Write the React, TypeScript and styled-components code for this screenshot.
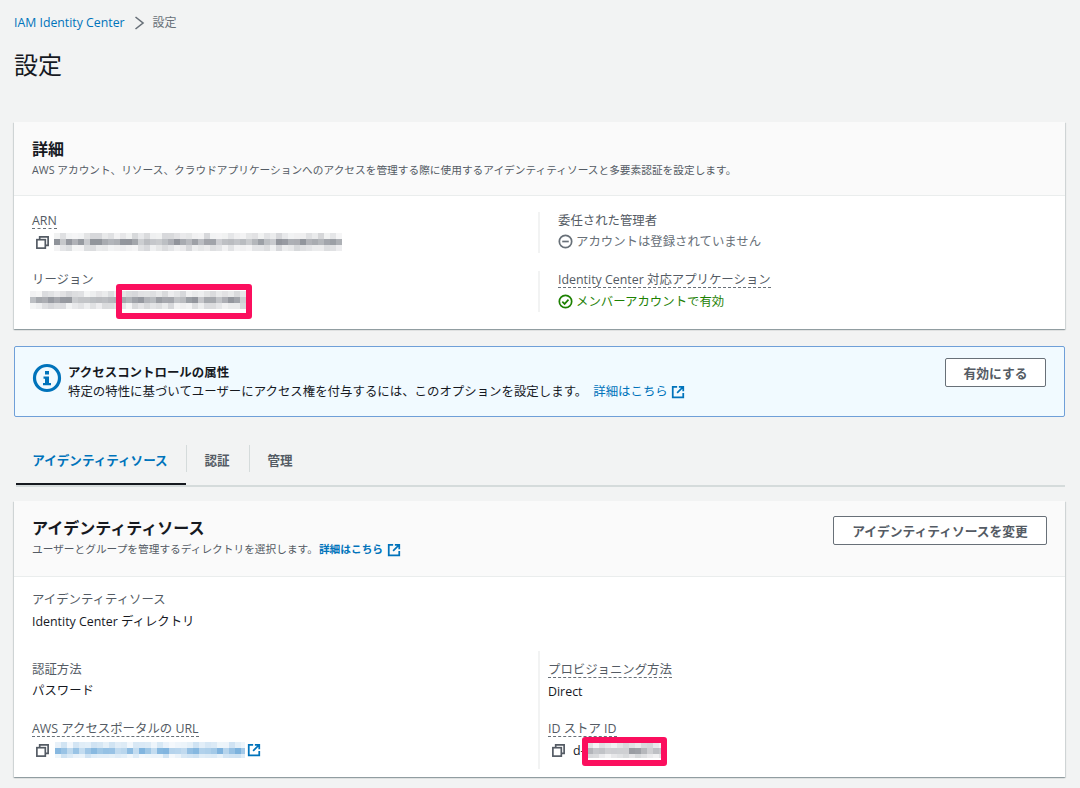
import React from "react";
import styled, { createGlobalStyle } from "styled-components";

const Global = createGlobalStyle`
  html, body { margin: 0; padding: 0; background: #f2f3f3; }
  body { font-family: "Open Sans", "Noto Sans CJK JP", sans-serif; color: #16191f; font-size: 12px; }
`;

const Page = styled.div`
  width: 1080px;
  height: 788px;
  overflow: hidden;
  box-sizing: border-box;
  padding: 14px 15px 0 14px;
`;
const Crumbs = styled.nav`
  display: flex;
  align-items: center;
  height: 17px;
  font-size: 12.3px;
  line-height: 17px;
`;
const CrumbLink = styled.a`
  color: #0073bb;
`;
const CrumbCurrent = styled.span`
  color: #687078;
  margin-left: 7px;
  font-size: 12px;
`;
const CrumbSep = styled.svg`
  margin-left: 9px;
  width: 12px;
  height: 14px;
`;
const Title = styled.h1`
  margin: 16px 0 0 0;
  font-size: 24px;
  line-height: 36px;
  font-weight: 400;
  color: #16191f;
`;
const Card = styled.section`
  background: #fff;
  box-shadow: 0 1px 1px 0 rgba(0, 28, 36, 0.25), 1px 1px 1px 0 rgba(0, 28, 36, 0.1), -1px 1px 1px 0 rgba(0, 28, 36, 0.1);
`;
const FirstCard = styled(Card)`
  margin-top: 39px;
  height: 207px;
`;
const SecondCard = styled(Card)`
  margin-top: 14px;
  height: 276px;
`;
const CardHead = styled.header<{ $h: number }>`
  box-sizing: border-box;
  height: ${(p) => p.$h}px;
  background: #fafafa;
  border-bottom: 1px solid #eaeded;
  padding: 0 18px;
  display: flex;
  justify-content: space-between;
  align-items: flex-start;
`;
const HeadText = styled.div<{ $top: number }>`
  padding-top: ${(p) => p.$top}px;
`;
const CardTitle = styled.h2<{ $size: number }>`
  margin: 0;
  font-size: ${(p) => p.$size}px;
  line-height: 20px;
  font-weight: 700;
  color: #16191f;
`;
const CardDesc = styled.p`
  margin: 4px 0 0;
  font-size: 10.7px;
  line-height: 15px;
  color: #545b64;
  display: flex;
  align-items: center;
`;
const Columns = styled.div<{ $top: number; $gap: number }>`
  display: grid;
  grid-template-columns: 506px 1fr;
  padding: ${(p) => p.$top}px 0 0 18px;
  row-gap: ${(p) => p.$gap}px;
`;
const Field = styled.div<{ $divider?: boolean; $inset?: number; $tall?: boolean }>`
  position: relative;
  box-sizing: border-box;
  height: ${(p) => (p.$tall ? 59 : 41)}px;
  ${(p) => (p.$tall ? "padding-top: 10px;" : "")}
  ${(p) => (p.$divider ? `border-left: 2px solid #f2f3f3; padding-left: ${p.$inset}px;` : "")}
`;
const Label = styled.div<{ $hint?: boolean }>`
  width: fit-content;
  font-size: 12.4px;
  line-height: 17px;
  height: 16px;
  color: #545b64;
  ${(p) => (p.$hint ? "border-bottom: 1px dashed #687078;" : "")}
`;
const Value = styled.div<{ $tone?: string }>`
  display: flex;
  align-items: center;
  height: 20px;
  margin-top: 3px;
  font-size: 12.4px;
  color: ${(p) => p.$tone || "#16191f"};
`;
const SingleField = styled.div`
  height: 41px;
  padding: 14px 0 0 18px;
  margin-bottom: 19px;
  ${Value} {
    margin-top: 4px;
  }
`;
const CopyIcon = styled.svg`
  width: 15px;
  height: 15px;
  margin: 0 5px 0 3px;
  flex: none;
`;
const StatusIcon = styled.svg`
  width: 15px;
  height: 15px;
  margin-right: 3px;
  flex: none;
`;
const Mosaic = styled.svg<{ $left?: number }>`
  flex: none;
  margin-left: ${(p) => p.$left || 0}px;
`;
const IdPrefix = styled.span`
  margin-left: 2px;
`;
const Highlight = styled.div<{ $l: number; $t: number; $w: number; $h: number }>`
  position: absolute;
  left: ${(p) => p.$l}px;
  top: ${(p) => p.$t}px;
  width: ${(p) => p.$w}px;
  height: ${(p) => p.$h}px;
  box-sizing: border-box;
  border: 6px solid #fb0f5e;
  border-radius: 3px;
`;
const Alert = styled.aside`
  box-sizing: border-box;
  height: 71px;
  margin-top: 17px;
  background: #f1faff;
  border: 1px solid #6f9fd8;
  border-radius: 2px;
  display: flex;
  padding: 10px 18px 0 17px;
`;
const AlertIcon = styled.svg`
  width: 30px;
  height: 30px;
  margin-top: 6px;
  flex: none;
`;
const AlertBody = styled.div`
  flex: 1;
  margin-left: 6px;
  padding-top: 7px;
`;
const AlertTitle = styled.div`
  font-weight: 700;
  font-size: 12.45px;
  line-height: 18px;
  color: #16191f;
`;
const AlertText = styled.div`
  display: flex;
  align-items: center;
  margin-top: 0;
  font-size: 12.43px;
  line-height: 19px;
  color: #16191f;
`;
const ExtLink = styled.a<{ $bold?: boolean; $left: number }>`
  display: inline-flex;
  align-items: center;
  margin-left: ${(p) => p.$left}px;
  color: #0073bb;
  font-weight: ${(p) => (p.$bold ? 700 : 400)};
`;
const ExtIcon = styled.svg<{ $left?: number }>`
  width: 14px;
  height: 14px;
  margin-left: ${(p) => p.$left ?? 4}px;
  flex: none;
`;
const Button = styled.button<{ $w: number; $top?: number }>`
  box-sizing: border-box;
  width: ${(p) => p.$w}px;
  height: 29px;
  margin-top: ${(p) => p.$top || 0}px;
  background: #fff;
  border: 1px solid #687078;
  border-radius: 2px;
  font-family: inherit;
  font-size: 12.75px;
  font-weight: 700;
  color: #545b64;
  padding: 0;
  flex: none;
`;
const TabBar = styled.div`
  display: flex;
  height: 40px;
  margin-top: 28px;
  margin-left: 2px;
  border-bottom: 2px solid #d5dbdb;
`;
const Tab = styled.div<{ $active?: boolean; $w: number }>`
  position: relative;
  box-sizing: border-box;
  width: ${(p) => p.$w}px;
  height: 40px;
  text-align: center;
  padding: 6px 2px 0 0;
  line-height: 20px;
  font-size: 12.55px;
  font-weight: 700;
  color: ${(p) => (p.$active ? "#0073bb" : "#545b64")};
  ${(p) => (p.$active ? "border-bottom: 2px solid #16191f;" : "")}
`;
const TabSep = styled.div`
  width: 1px;
  height: 27px;
  background: #d5dbdb;
  flex: none;
`;

function Pixels({ w, h, seed, tint, left }: { w: number; h: number; seed: number; tint: "grey" | "blue"; left?: number }) {
  const cell = 6;
  const cols = Math.ceil(w / cell);
  const rows = Math.ceil(h / cell);
  const cells: React.ReactNode[] = [];
  let s = seed;
  for (let y = 0; y < rows; y++) {
    for (let x = 0; x < cols; x++) {
      s = (s * 16807) % 2147483647;
      const r = (s % 1000) / 1000;
      const mid = y === Math.floor(rows / 2);
      const a = mid ? 0.3 + r * 0.4 : 0.06 + r * 0.2;
      const fill = tint === "grey" ? `rgba(95,100,110,${a})` : `rgba(60,140,205,${a})`;
      cells.push(<rect key={`${x}-${y}`} x={x * cell} y={y * cell} width={cell} height={cell} fill={fill} />);
    }
  }
  return (
    <Mosaic $left={left} width={w} height={h} viewBox={`0 0 ${w} ${h}`}>
      {cells}
    </Mosaic>
  );
}

const Copy = () => (
  <CopyIcon viewBox="0 0 16 16" fill="none" stroke="#545b64" strokeWidth="1.8">
    <rect x="2" y="5" width="9" height="9" />
    <path d="M5 5V2h9v9h-3" />
  </CopyIcon>
);

const External = ({ left }: { left?: number }) => (
  <ExtIcon $left={left} viewBox="0 0 16 16" fill="none" stroke="#0073bb" strokeWidth="2">
    <path d="M7 2H2v12h12V9" />
    <path d="M9 2h5v5M14 2L7 9" />
  </ExtIcon>
);

export default function App() {
  return (
    <>
      <Global />
      <Page>
        <Crumbs>
          <CrumbLink>IAM Identity Center</CrumbLink>
          <CrumbSep viewBox="0 0 12 14" fill="none" stroke="#687078" strokeWidth="1.6">
            <path d="M1.5 1L9 7l-7.5 6" />
          </CrumbSep>
          <CrumbCurrent>設定</CrumbCurrent>
        </Crumbs>
        <Title>設定</Title>

        <FirstCard>
          <CardHead $h={74}>
            <HeadText $top={17}>
              <CardTitle $size={16}>詳細</CardTitle>
              <CardDesc>AWS アカウント、リソース、クラウドアプリケーションへのアクセスを管理する際に使用するアイデンティティソースと多要素認証を設定します。</CardDesc>
            </HeadText>
          </CardHead>
          <Columns $top={16} $gap={18}>
            <Field>
              <Label $hint>ARN</Label>
              <Value>
                <Copy />
                <Pixels w={288} h={18} seed={77} tint="grey" left={-1} />
              </Value>
            </Field>
            <Field $divider $inset={18}>
              <Label>委任された管理者</Label>
              <Value $tone="#687078">
                <StatusIcon viewBox="0 0 16 16" fill="none" stroke="#687078" strokeWidth="1.8">
                  <circle cx="8" cy="8" r="6.6" />
                  <path d="M4.5 8h7" />
                </StatusIcon>
                アカウントは登録されていません
              </Value>
            </Field>
            <Field>
              <Label>リージョン</Label>
              <Value>
                <Pixels w={216} h={18} seed={901} tint="grey" left={-2} />
              </Value>
              <Highlight $l={84} $t={13} $w={136} $h={35} />
            </Field>
            <Field $divider $inset={18}>
              <Label $hint>Identity Center 対応アプリケーション</Label>
              <Value $tone="#1d8102">
                <StatusIcon viewBox="0 0 16 16" fill="none" stroke="#1d8102" strokeWidth="1.8">
                  <circle cx="8" cy="8" r="6.6" />
                  <path d="M4.6 8.2l2.4 2.4 4.2-4.6" />
                </StatusIcon>
                メンバーアカウントで有効
              </Value>
            </Field>
          </Columns>
        </FirstCard>

        <Alert>
          <AlertIcon viewBox="0 0 30 30">
            <circle cx="15" cy="15" r="12.5" fill="none" stroke="#0073bb" strokeWidth="3.2" />
            <rect x="13" y="8" width="4" height="3.5" fill="#0073bb" />
            <path d="M11.5 13.5H17V20h2v2.2h-8V20h2v-4.3h-1.5z" fill="#0073bb" />
          </AlertIcon>
          <AlertBody>
            <AlertTitle>アクセスコントロールの属性</AlertTitle>
            <AlertText>
              特定の特性に基づいてユーザーにアクセス権を付与するには、このオプションを設定します。
              <ExtLink $left={6}>
                詳細はこちら
                <External left={3} />
              </ExtLink>
            </AlertText>
          </AlertBody>
          <Button $w={101} $top={1}>有効にする</Button>
        </Alert>

        <TabBar>
          <Tab $active $w={170}>アイデンティティソース</Tab>
          <TabSep />
          <Tab $w={62}>認証</Tab>
          <TabSep />
          <Tab $w={62}>管理</Tab>
        </TabBar>

        <SecondCard>
          <CardHead $h={76}>
            <HeadText $top={17}>
              <CardTitle $size={16}>アイデンティティソース</CardTitle>
              <CardDesc>
                ユーザーとグループを管理するディレクトリを選択します。
                <ExtLink $bold $left={1}>
                  詳細はこちら
                  <External />
                </ExtLink>
              </CardDesc>
            </HeadText>
            <Button $w={214} $top={15}>アイデンティティソースを変更</Button>
          </CardHead>
          <SingleField>
            <Label>アイデンティティソース</Label>
            <Value>Identity Center ディレクトリ</Value>
          </SingleField>
          <Columns $top={0} $gap={0}>
            <Field $tall>
              <Label>認証方法</Label>
              <Value>パスワード</Value>
            </Field>
            <Field $tall $divider $inset={8}>
              <Label $hint>プロビジョニング方法</Label>
              <Value>Direct</Value>
            </Field>
            <Field $tall>
              <Label $hint>AWS アクセスポータルの URL</Label>
              <Value>
                <Copy />
                <Pixels w={190} h={16} seed={4242} tint="blue" />
                <External left={2} />
              </Value>
            </Field>
            <Field $tall $divider $inset={8}>
              <Label $hint>ID ストア ID</Label>
              <Value>
                <Copy />
                <IdPrefix>d-</IdPrefix>
                <Pixels w={74} h={16} seed={3111} tint="grey" left={2} />
              </Value>
              <Highlight $l={42} $t={27} $w={85} $h={29} />
            </Field>
          </Columns>
        </SecondCard>
      </Page>
    </>
  );
}
